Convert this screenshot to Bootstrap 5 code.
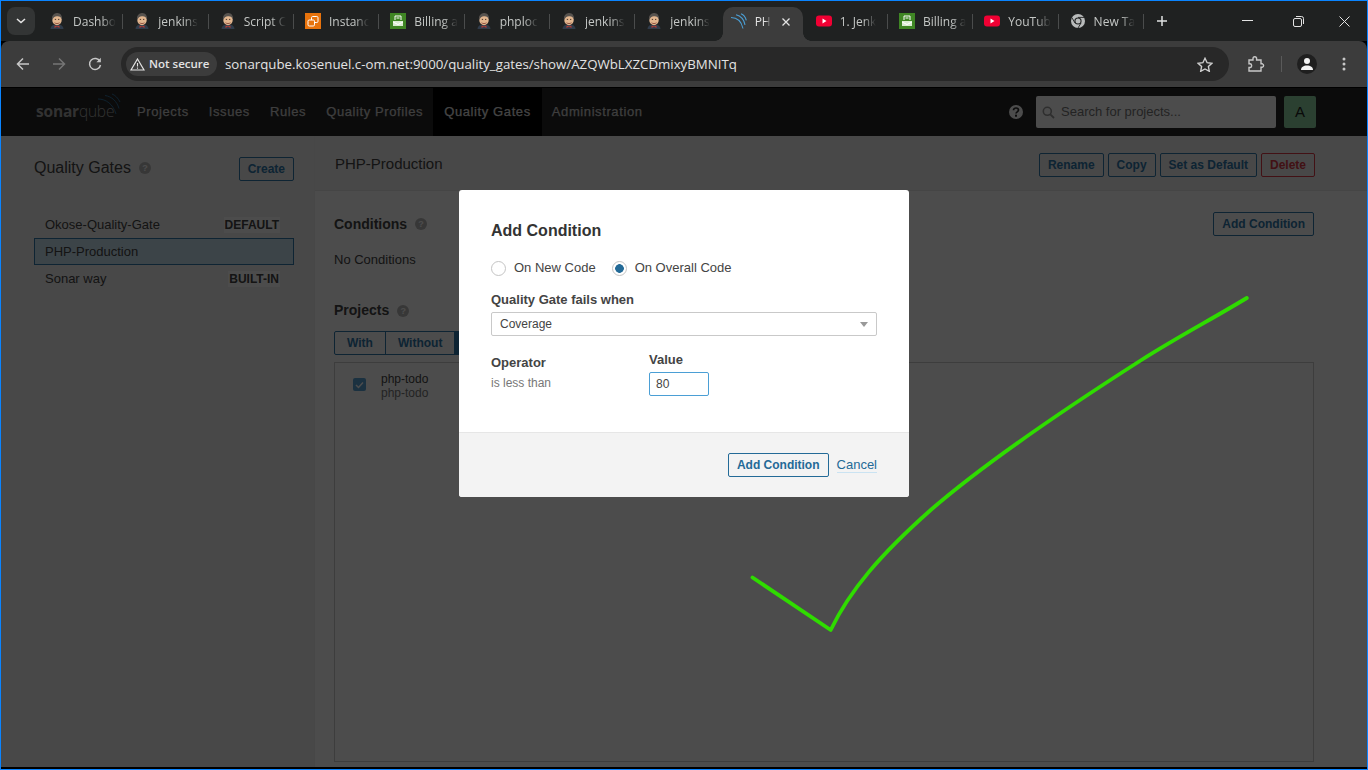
<!DOCTYPE html>
<html lang="en">
<head>
<meta charset="UTF-8" />
<title>PHP-Production - Quality Gates</title>
<link href="https://cdn.jsdelivr.net/npm/bootstrap@5.3.3/dist/css/bootstrap.min.css" rel="stylesheet"/>
<style>
  html, body { height: 100%; margin: 0; overflow: hidden; background: #000; }
  .app-window { position: relative; height: 770px; border: 1px solid #0a84ff; background: #000; font-family: "Liberation Sans", Arial, sans-serif; }

  /* browser chrome */
  .tab-strip { height: 40px; background: #1f2121; padding-left: 6px; font-family: "Open Sans", "Noto Sans", sans-serif; font-size: 12px; color: #c4c7c5; }
  .tab-menu { width: 28px; height: 28px; margin-top: 6px; margin-right: 3px; border-radius: 8px; background: #333535; }
  .tab-item { width: 85.33px; height: 34px; margin-top: 6px; padding-left: 11px; gap: 8px; position: relative; flex: none; }
  .tab-item::after { content: ""; position: absolute; right: 0; top: 7px; height: 15px; width: 1px; background: #4a4c4c; }
  .tab-item.no-sep::after { display: none; }
  .tab-item.is-active { background: #3c3c3c; border-radius: 10px 10px 0 0; margin-left: 2px; width: 80px; padding-left: 8px; color: #e3e3e3; }
  .tab-item.is-active::before, .tab-item.is-active::after { content: ""; display: block; position: absolute; bottom: 0; top: auto; width: 8px; height: 8px; background: radial-gradient(circle at 0 0, #1f2121 7.5px, #3c3c3c 8px); }
  .tab-item.is-active::before { left: -8px; }
  .tab-item.is-active::after { right: -8px; background: radial-gradient(circle at 100% 0, #1f2121 7.5px, #3c3c3c 8px); }
  .tab-title { white-space: nowrap; -webkit-mask-image: linear-gradient(90deg, #000 65%, transparent); mask-image: linear-gradient(90deg, #000 65%, transparent); line-height: 30px; }
  .tab-item svg { flex: none; margin-top: 6px; }
  .tab-item svg.tab-close { position: absolute; left: 58px; top: 4px; }
  .tab-item.has-gap { padding-left: 13px; }
  .new-tab { margin: 6px 0 0 9px; width: 18px; height: 28px; }
  .win-controls { margin-left: auto; margin-right: -1px; }
  .win-btn { width: 47px; height: 40px; margin-left: 4px; }
  .win-btn.is-close { margin-left: -1px; }

  .tool-bar { height: 46px; background: #3c3c3c; border-radius: 8px 8px 0 0; padding-left: 4px; }
  .tool-btn { width: 36px; height: 36px; }
  .addr-bar { width: 1108px; height: 34px; margin-left: 8px; background: #282828; border-radius: 17px; padding: 0 5px; color: #e3e3e3; font-family: "Open Sans", "Noto Sans", sans-serif; font-size: 13.27px; }
  .addr-url { padding-top: 1px; }
  .sec-chip { width: 91px; height: 24px; background: #3c3c3c; border-radius: 12px; font-size: 11.5px; font-weight: 600; gap: 4px; padding-left: 4px; margin-right: 8px; white-space: nowrap; }
  .star-btn { margin-left: auto; margin-right: 11px; }
  .tool-right { margin-left: 9px; }
  .tool-sep { width: 1px; height: 16px; background: #5a5a5a; margin: 0 15px 0 7px; }
  .avatar-dot { width: 20px; height: 20px; border-radius: 50%; background: #1f1f1f; }
  .tool-menu { margin-left: 9px; }

  /* sonarqube page */
  .sq-page { height: 679px; background: #fff; font-size: 13px; color: #444; margin-top: 1px; position: relative; overflow: hidden; }
  .sq-nav { height: 48px; background: #262626; padding-left: 35px; padding-right: 51px; }
  .sq-logo { width: 91px; color: #a8a8a8; font-family: "Open Sans", "Noto Sans", sans-serif; font-size: 15.5px; letter-spacing: -.2px; position: relative; }
  .sq-logo b { font-weight: 700; }
  .sq-logo span { font-weight: 300; }
  .sq-logo svg { position: absolute; left: 62px; top: -7px; }
  .sq-link { padding: 0 10px; height: 48px; line-height: 47px; color: #cfcfcf; letter-spacing: .6px; -webkit-text-stroke: .25px #cfcfcf; white-space: nowrap; text-decoration: none; }
  .sq-link.is-current { background: #000; color: #f0f0f0; padding: 0 11px; }
  .sq-search { width: 240px; height: 32px; background: #fff; border-radius: 2px; color: #777; font-size: 13px; padding-left: 6px; gap: 6px; margin-left: 12px; }
  .sq-user { width: 32px; height: 32px; background: #8fd7a4; color: #222; border-radius: 2px; margin-left: 8px; font-size: 15px; }
  .sq-body { height: 631px; }
  .sq-side { width: 314px; flex: none; background: #f0f0f0; border-right: 1px solid #eee; padding: 21px 20px 0 33px; }
  .sq-side-title { font-size: 16px; color: #444; margin-top: -2px; }
  .qg-btn { font-size: 12px; font-weight: 700; line-height: 22px; height: 24px; padding: 0 8px; border: 1px solid #2f78ab; border-radius: 2px; background: transparent; color: #2f78ab; white-space: nowrap; }
  .qg-btn.is-danger { border-color: #dc3b47; color: #dc3b47; }
  .sq-dialog .qg-btn { border-color: #236a97; color: #236a97; }
  .qg-list { margin-top: 30px; }
  .qg-row { height: 27px; padding: 0 13px 0 10px; border: 1px solid transparent; color: #444; font-size: 13px; }
  .qg-row.is-selected { height: 27px; background: #cae3f2; border-color: #2f78ab; }
  .qg-tag { background: #fff; font-size: 12px; font-weight: 700; padding: 1px 1px; line-height: 14px; }
  .help-dot { width: 12px; height: 12px; border-radius: 50%; background: #b9b9b9; color: #fff; font-size: 9px; font-weight: 700; line-height: 12px; text-align: center; display: inline-block; }
  .sq-main { flex: 1 1 auto; min-width: 0; }
  .sq-head { height: 55px; background: #f0f0f0; border-bottom: 1px solid #e6e6e6; padding: 17px 52px 0 20px; font-size: 15px; }
  .sq-head-title { line-height: 22px; }
  .sq-content { padding: 21px 53px 0 19px; }
  .sq-h3 { font-size: 14px; font-weight: 700; color: #444; }
  .sq-nocond { margin-top: 16px; line-height: 15px; }
  .sq-projects { margin-top: 33px; }
  .sq-btn-group { margin-top: 10px; height: 24px; }
  .sq-btn-group .qg-btn { border-radius: 0; margin-right: -1px; padding: 0 12px; }
  .sq-btn-group .qg-btn.is-first { border-radius: 2px 0 0 2px; }
  .sq-btn-group .qg-btn.is-on { background: #2f78ab; color: #fff; }
  .sq-box { height: 400px; margin-top: 7px; border: 1px solid #ccc; padding: 9px 0 0 18px; font-size: 12px; line-height: 14px; }
  .sq-check { width: 13px; height: 13px; background: #5aa3d8; border-radius: 2px; margin-right: 15px; margin-top: 6px; }
  .sq-muted { color: #777; }

  /* overlay + dialog */
  .sq-backdrop { position: absolute; inset: 0; background: rgba(0, 0, 0, .7); }
  .sq-dialog { position: absolute; left: 458px; top: 102px; width: 450px; height: 307px; background: #fff; border-radius: 3px; color: #444; font-size: 13px; }
  .sq-dialog-body { padding: 31px 32px 0; height: 242px; }
  .sq-dialog-title { font-size: 16px; font-weight: 700; line-height: 20px; color: #333; }
  .radio-row { margin-top: 19px; gap: 16px; height: 16px; }
  .radio-mark { width: 15px; height: 15px; border: 1px solid #c4c4c4; border-radius: 50%; margin-right: 8px; background: #fff; }
  .radio-mark.is-on { background: radial-gradient(circle, #236a97 0 4px, #fff 4.6px); }
  .lbl-strong { font-weight: 700; color: #444; line-height: 15px; }
  .sq-gate-lbl { margin-top: 16px; }
  .sq-select { margin-top: 5px; width: 386px; height: 24px; border: 1px solid #c9c9c9; border-radius: 2px; padding: 0 8px; font-size: 12px; line-height: 22px; }
  .sq-caret { width: 0; height: 0; border-left: 4px solid transparent; border-right: 4px solid transparent; border-top: 5px solid #999; }
  .sq-op { width: 158px; padding-top: 3px; }
  .sq-op-text { font-size: 12px; line-height: 14px; margin-top: 6px; }
  .sq-value { margin-top: 5px; width: 60px; height: 24px; border: 1px solid #4b9fd5; border-radius: 2px; padding: 0 6px; font-size: 12px; line-height: 22px; color: #444; }
  .sq-dialog-foot { height: 65px; background: #f3f3f3; border-top: 1px solid #e6e6e6; border-radius: 0 0 3px 3px; padding-right: 32px; gap: 8px; }
  .sq-cancel { color: #236a97; border-bottom: 1px solid #cae3f2; line-height: 15px; font-size: 13px; text-decoration: none; }
  .sq-rows-gap { margin-top: 16px; }
  .ink-tick { position: absolute; left: -1px; top: -1px; pointer-events: none; }
  .win-floor { height: 1px; }
</style>
</head>
<body>

<svg width="0" height="0" class="position-absolute">
  <defs>
    <symbol id="jenkins" viewBox="0 0 16 16">
      <path d="M1.500 16c.2-2.500 1.500-3.600 3.500-4.200h6c2 .6 3.300 1.700 3.500 4.200z" fill="#2f3b4a"/>
      <path d="M5.800 12.500l2.200 1 2.200-1 .6 2.200-2.800-.6-2.800.6z" fill="#b03a35"/>
      <ellipse cx="8" cy="6.500" rx="4.800" ry="5.800" fill="#e2b68f"/>
      <path d="M3.100 7.500C2.300 2.800 4.800 0 8.200 0s5.300 2.800 4.800 6.800C12.200 4 10.300 3 8 3.200S4 4.500 3.100 7.500z" fill="#57534f"/>
      <path d="M5.800 6.400h1.300M9 6.400h1.300" stroke="#3a2a20" stroke-width=".9"/>
      <path d="M5.500 9.800c1.500 1 3.500 1 5 0" stroke="#8a4c3a" stroke-width=".9" fill="none"/>
    </symbol>
    <symbol id="aws-orange" viewBox="0 0 16 16">
      <rect width="16" height="16" fill="#e8730c"/>
      <rect x="6.500" y="3.500" width="6.500" height="6" rx="1.200" fill="none" stroke="#fff" stroke-width="1"/>
      <rect x="3" y="7" width="6.500" height="6" rx="1.200" fill="#e8730c" stroke="#fff" stroke-width="1"/>
    </symbol>
    <symbol id="aws-green" viewBox="0 0 16 16">
      <rect width="16" height="16" fill="#3f8624"/>
      <path d="M3 8h10v5H3z" fill="#d9ecd0"/>
      <path d="M5 7V3h6v4M6.500 5h3M3 9l5 2.500L13 9" fill="none" stroke="#fff" stroke-width="1"/>
    </symbol>
    <symbol id="youtube" viewBox="0 0 16 12">
      <rect width="16" height="11" y=".5" rx="3" fill="#f00033"/>
      <path d="M6.500 3.500v5L10.500 6z" fill="#fff"/>
    </symbol>
  </defs>
</svg>

<div class="app-window d-flex flex-column">

  <div class="tab-strip d-flex align-items-start">
    <div class="tab-menu d-flex align-items-center justify-content-center flex-none">
      <svg width="10" height="6" viewBox="0 0 10 6"><path d="M1 1l4 3.500L9 1" fill="none" stroke="#e3e3e3" stroke-width="1.600"/></svg>
    </div>
    <div class="tab-item d-flex align-items-start"><svg width="16" height="16"><use href="#jenkins"/></svg><span class="tab-title">Dashbo</span></div>
    <div class="tab-item d-flex align-items-start"><svg width="16" height="16"><use href="#jenkins"/></svg><span class="tab-title">jenkins</span></div>
    <div class="tab-item d-flex align-items-start"><svg width="16" height="16"><use href="#jenkins"/></svg><span class="tab-title">Script C</span></div>
    <div class="tab-item d-flex align-items-start"><svg width="16" height="16"><use href="#aws-orange"/></svg><span class="tab-title">Instanc</span></div>
    <div class="tab-item d-flex align-items-start"><svg width="16" height="16"><use href="#aws-green"/></svg><span class="tab-title">Billing a</span></div>
    <div class="tab-item d-flex align-items-start"><svg width="16" height="16"><use href="#jenkins"/></svg><span class="tab-title">phploc</span></div>
    <div class="tab-item d-flex align-items-start"><svg width="16" height="16"><use href="#jenkins"/></svg><span class="tab-title">jenkins</span></div>
    <div class="tab-item no-sep d-flex align-items-start"><svg width="16" height="16"><use href="#jenkins"/></svg><span class="tab-title">jenkins</span></div>
    <div class="tab-item is-active d-flex align-items-start">
      <svg width="16" height="16" viewBox="0 0 16 16"><g fill="none" stroke="#4b9fd5" stroke-width="1.100"><path d="M0 4.500c6 0 10.500 4 12 11"/><path d="M5 1.800c4.500 1 8 5 9 10"/><path d="M10 .8c2.500 1 4.500 3.500 5.300 6.500"/></g></svg>
      <span class="tab-title">PH</span>
      <svg class="tab-close" width="10" height="10" viewBox="0 0 10 10"><path d="M1.500 1.500l7 7M8.500 1.500l-7 7" stroke="#e3e3e3" stroke-width="1.300"/></svg>
    </div>
    <div class="tab-item has-gap d-flex align-items-start"><svg width="16" height="16" viewBox="0 0 16 16"><use href="#youtube" y="2" height="12" width="16"/></svg><span class="tab-title">1. Jenk</span></div>
    <div class="tab-item d-flex align-items-start"><svg width="16" height="16"><use href="#aws-green"/></svg><span class="tab-title">Billing a</span></div>
    <div class="tab-item d-flex align-items-start"><svg width="16" height="16" viewBox="0 0 16 16"><use href="#youtube" y="2" height="12" width="16"/></svg><span class="tab-title">YouTub</span></div>
    <div class="tab-item d-flex align-items-start"><svg width="16" height="16" viewBox="0 0 16 16"><circle cx="8" cy="8" r="7" fill="#b8bbbb"/><circle cx="8" cy="8" r="3.600" fill="#1f2121"/><circle cx="8" cy="8" r="2.500" fill="#b8bbbb"/><path d="M8 4.400h6.500M5 10L1.800 4.500M11 10l-3.300 5.500" stroke="#1f2121" stroke-width=".9"/></svg><span class="tab-title">New Ta</span></div>
    <div class="new-tab d-flex align-items-center justify-content-center">
      <svg width="12" height="12" viewBox="0 0 12 12"><path d="M6 1v10M1 6h10" stroke="#dfe1e1" stroke-width="1.500"/></svg>
    </div>
    <div class="win-controls d-flex">
      <div class="win-btn d-flex align-items-center justify-content-center"><svg width="11" height="2"><rect width="11" height="1" fill="#e3e3e3"/></svg></div>
      <div class="win-btn d-flex align-items-center justify-content-center"><svg width="11" height="11" viewBox="0 0 11 11"><rect x=".5" y="2.500" width="8" height="8" rx="1.500" fill="none" stroke="#e3e3e3"/><path d="M3 .5h5.500a2 2 0 0 1 2 2V8" fill="none" stroke="#e3e3e3"/></svg></div>
      <div class="win-btn is-close d-flex align-items-center justify-content-center"><svg width="11" height="11" viewBox="0 0 11 11"><path d="M.5.500l10 10M10.500.500l-10 10" stroke="#e3e3e3"/></svg></div>
    </div>
  </div>

  <div class="tool-bar d-flex align-items-center">
    <div class="tool-btn d-flex align-items-center justify-content-center"><svg width="14" height="14" viewBox="0 0 14 14"><path d="M13 7H2M7 1.500L1.500 7 7 12.500" fill="none" stroke="#c7c7c7" stroke-width="1.500"/></svg></div>
    <div class="tool-btn d-flex align-items-center justify-content-center"><svg width="14" height="14" viewBox="0 0 14 14"><path d="M1 7h11M7 1.500L12.500 7 7 12.500" fill="none" stroke="#757575" stroke-width="1.500"/></svg></div>
    <div class="tool-btn d-flex align-items-center justify-content-center"><svg width="14" height="14" viewBox="0 0 14 14"><path d="M12 4.500A5.500 5.500 0 1 0 12.500 8" fill="none" stroke="#c7c7c7" stroke-width="1.500"/><path d="M12.800 .8v4.400H8.400z" fill="#c7c7c7"/></svg></div>
    <div class="addr-bar d-flex align-items-center">
      <div class="sec-chip d-flex align-items-center">
        <svg width="15" height="13" viewBox="0 0 15 13"><path d="M7.500 1L14 12H1z" fill="none" stroke="#e3e3e3" stroke-width="1.200"/><path d="M7.500 5v3.500M7.500 9.500v1.200" stroke="#e3e3e3" stroke-width="1.100"/></svg>
        <span>Not secure</span>
      </div>
      <span class="addr-url">sonarqube.kosenuel.c-om.net:9000/quality_gates/show/AZQWbLXZCDmixyBMNITq</span>
      <svg class="star-btn" width="16" height="15" viewBox="0 0 16 15"><path d="M8 1.300l2.100 4.400 4.800.6-3.500 3.300.9 4.700L8 12l-4.300 2.300.9-4.700L1.100 6.300l4.800-.6z" fill="none" stroke="#d0d0d0" stroke-width="1.400"/></svg>
    </div>
    <div class="tool-right d-flex align-items-center">
      <div class="tool-btn d-flex align-items-center justify-content-center"><svg width="17" height="17" viewBox="0 0 17 17"><path d="M1 4h4V2.500a1.800 1.800 0 0 1 3.600 0V4h4.400v3.800h1.400a1.800 1.800 0 0 1 0 3.400H13V15H1v-3.500h1.200a1.900 1.900 0 0 0 0-3.700H1z" fill="none" stroke="#c7c7c7" stroke-width="1.400"/></svg></div>
      <div class="tool-sep"></div>
      <div class="avatar-dot d-flex align-items-center justify-content-center"><svg width="14" height="14" viewBox="0 0 14 14"><circle cx="7" cy="4" r="3" fill="#f2f2f2"/><path d="M1 13c0-3 2.500-4.500 6-4.500s6 1.500 6 4.500z" fill="#f2f2f2"/></svg></div>
      <div class="tool-btn tool-menu d-flex align-items-center justify-content-center"><svg width="4" height="14" viewBox="0 0 4 14"><circle cx="2" cy="2" r="1.500" fill="#c7c7c7"/><circle cx="2" cy="7" r="1.500" fill="#c7c7c7"/><circle cx="2" cy="12" r="1.500" fill="#c7c7c7"/></svg></div>
    </div>
  </div>

  <div class="sq-page">
    <nav class="sq-nav d-flex align-items-center">
      <div class="sq-logo"><b>sonar</b><span>qube</span>
        <svg width="24" height="22" viewBox="0 0 24 22"><g fill="none" stroke="#2f6f9a" stroke-width="1"><path d="M0 6c8 0 15 5 18 15"/><path d="M7 2.500c7 1 12 6 14 13"/><path d="M14 1c3 1 6 4 8 8"/></g></svg>
      </div>
      <a class="sq-link" href="#">Projects</a>
      <a class="sq-link" href="#">Issues</a>
      <a class="sq-link" href="#">Rules</a>
      <a class="sq-link" href="#">Quality Profiles</a>
      <a class="sq-link is-current" href="#">Quality Gates</a>
      <a class="sq-link" href="#">Administration</a>
      <div class="ms-auto d-flex align-items-center">
        <svg width="16" height="16" viewBox="0 0 16 16"><circle cx="8" cy="8" r="7" fill="#fff"/><path d="M5.500 6.300C5.500 4.800 6.600 4 8 4s2.500.9 2.500 2.100c0 1.800-2.500 1.700-2.500 3.500" fill="none" stroke="#262626" stroke-width="1.700"/><rect x="7" y="10.700" width="2" height="2" fill="#262626"/></svg>
        <div class="sq-search d-flex align-items-center">
          <svg width="13" height="13" viewBox="0 0 13 13"><circle cx="5.300" cy="5.300" r="4" fill="none" stroke="#999" stroke-width="1.600"/><path d="M8.300 8.300L12 12" stroke="#999" stroke-width="1.800"/></svg>
          <span>Search for projects...</span>
        </div>
        <div class="sq-user d-flex align-items-center justify-content-center">A</div>
      </div>
    </nav>

    <div class="sq-body d-flex">
      <aside class="sq-side">
        <div class="d-flex align-items-center justify-content-between">
          <div class="sq-side-title d-flex align-items-center gap-2"><span>Quality Gates</span><span class="help-dot">?</span></div>
          <button class="qg-btn" type="button">Create</button>
        </div>
        <div class="qg-list">
          <div class="qg-row d-flex align-items-center justify-content-between"><span>Okose-Quality-Gate</span><span class="qg-tag">DEFAULT</span></div>
          <div class="qg-row is-selected d-flex align-items-center justify-content-between"><span>PHP-Production</span></div>
          <div class="qg-row d-flex align-items-center justify-content-between"><span>Sonar way</span><span class="qg-tag">BUILT-IN</span></div>
        </div>
      </aside>

      <main class="sq-main">
        <div class="sq-head d-flex justify-content-between">
          <div class="sq-head-title">PHP-Production</div>
          <div class="d-flex gap-1">
            <button class="qg-btn" type="button">Rename</button>
            <button class="qg-btn" type="button">Copy</button>
            <button class="qg-btn" type="button">Set as Default</button>
            <button class="qg-btn is-danger" type="button">Delete</button>
          </div>
        </div>
        <div class="sq-content">
          <div class="d-flex align-items-center justify-content-between">
            <div class="sq-h3 d-flex align-items-center gap-2"><span>Conditions</span><span class="help-dot">?</span></div>
            <button class="qg-btn" type="button">Add Condition</button>
          </div>
          <div class="sq-nocond">No Conditions</div>
          <div class="sq-projects sq-h3 d-flex align-items-center gap-2"><span>Projects</span><span class="help-dot">?</span></div>
          <div class="sq-btn-group d-flex">
            <button class="qg-btn is-first" type="button">With</button>
            <button class="qg-btn" type="button">Without</button>
            <button class="qg-btn is-on" type="button">All</button>
          </div>
          <div class="sq-box d-flex align-items-start">
            <div class="sq-check d-flex align-items-center justify-content-center"><svg width="9" height="8" viewBox="0 0 9 8"><path d="M1 4l2.500 2.500L8 1.500" fill="none" stroke="#fff" stroke-width="1.500"/></svg></div>
            <div><div>php-todo</div><div class="sq-muted">php-todo</div></div>
          </div>
        </div>
      </main>
    </div>

    <div class="sq-backdrop"></div>

    <div class="sq-dialog d-flex flex-column">
      <div class="sq-dialog-body">
        <div class="sq-dialog-title">Add Condition</div>
        <div class="radio-row d-flex align-items-center">
          <div class="d-flex align-items-center"><span class="radio-mark"></span><span>On New Code</span></div>
          <div class="d-flex align-items-center"><span class="radio-mark is-on"></span><span>On Overall Code</span></div>
        </div>
        <div class="lbl-strong sq-gate-lbl">Quality Gate fails when</div>
        <div class="sq-select d-flex align-items-center justify-content-between"><span>Coverage</span><span class="sq-caret"></span></div>
        <div class="sq-rows-gap d-flex">
          <div class="sq-op">
            <div class="lbl-strong">Operator</div>
            <div class="sq-muted sq-op-text">is less than</div>
          </div>
          <div>
            <div class="lbl-strong">Value</div>
            <div class="sq-value">80</div>
          </div>
        </div>
      </div>
      <div class="sq-dialog-foot d-flex align-items-center justify-content-end">
        <button class="qg-btn" type="button">Add Condition</button>
        <a class="sq-cancel" href="#">Cancel</a>
      </div>
    </div>
  </div>

  <div class="win-floor"></div>

  <svg class="ink-tick" width="1368" height="770" viewBox="0 0 1368 770">
    <path d="M752.500 577.500L830.700 630C850 590 880 555 930.700 510C985 463 1060 412 1141.400 360C1176 338 1212 319 1246.800 298" fill="none" stroke="#2fdc00" stroke-width="3.800" stroke-linecap="round" stroke-linejoin="round"/>
  </svg>
</div>

</body>
</html>
